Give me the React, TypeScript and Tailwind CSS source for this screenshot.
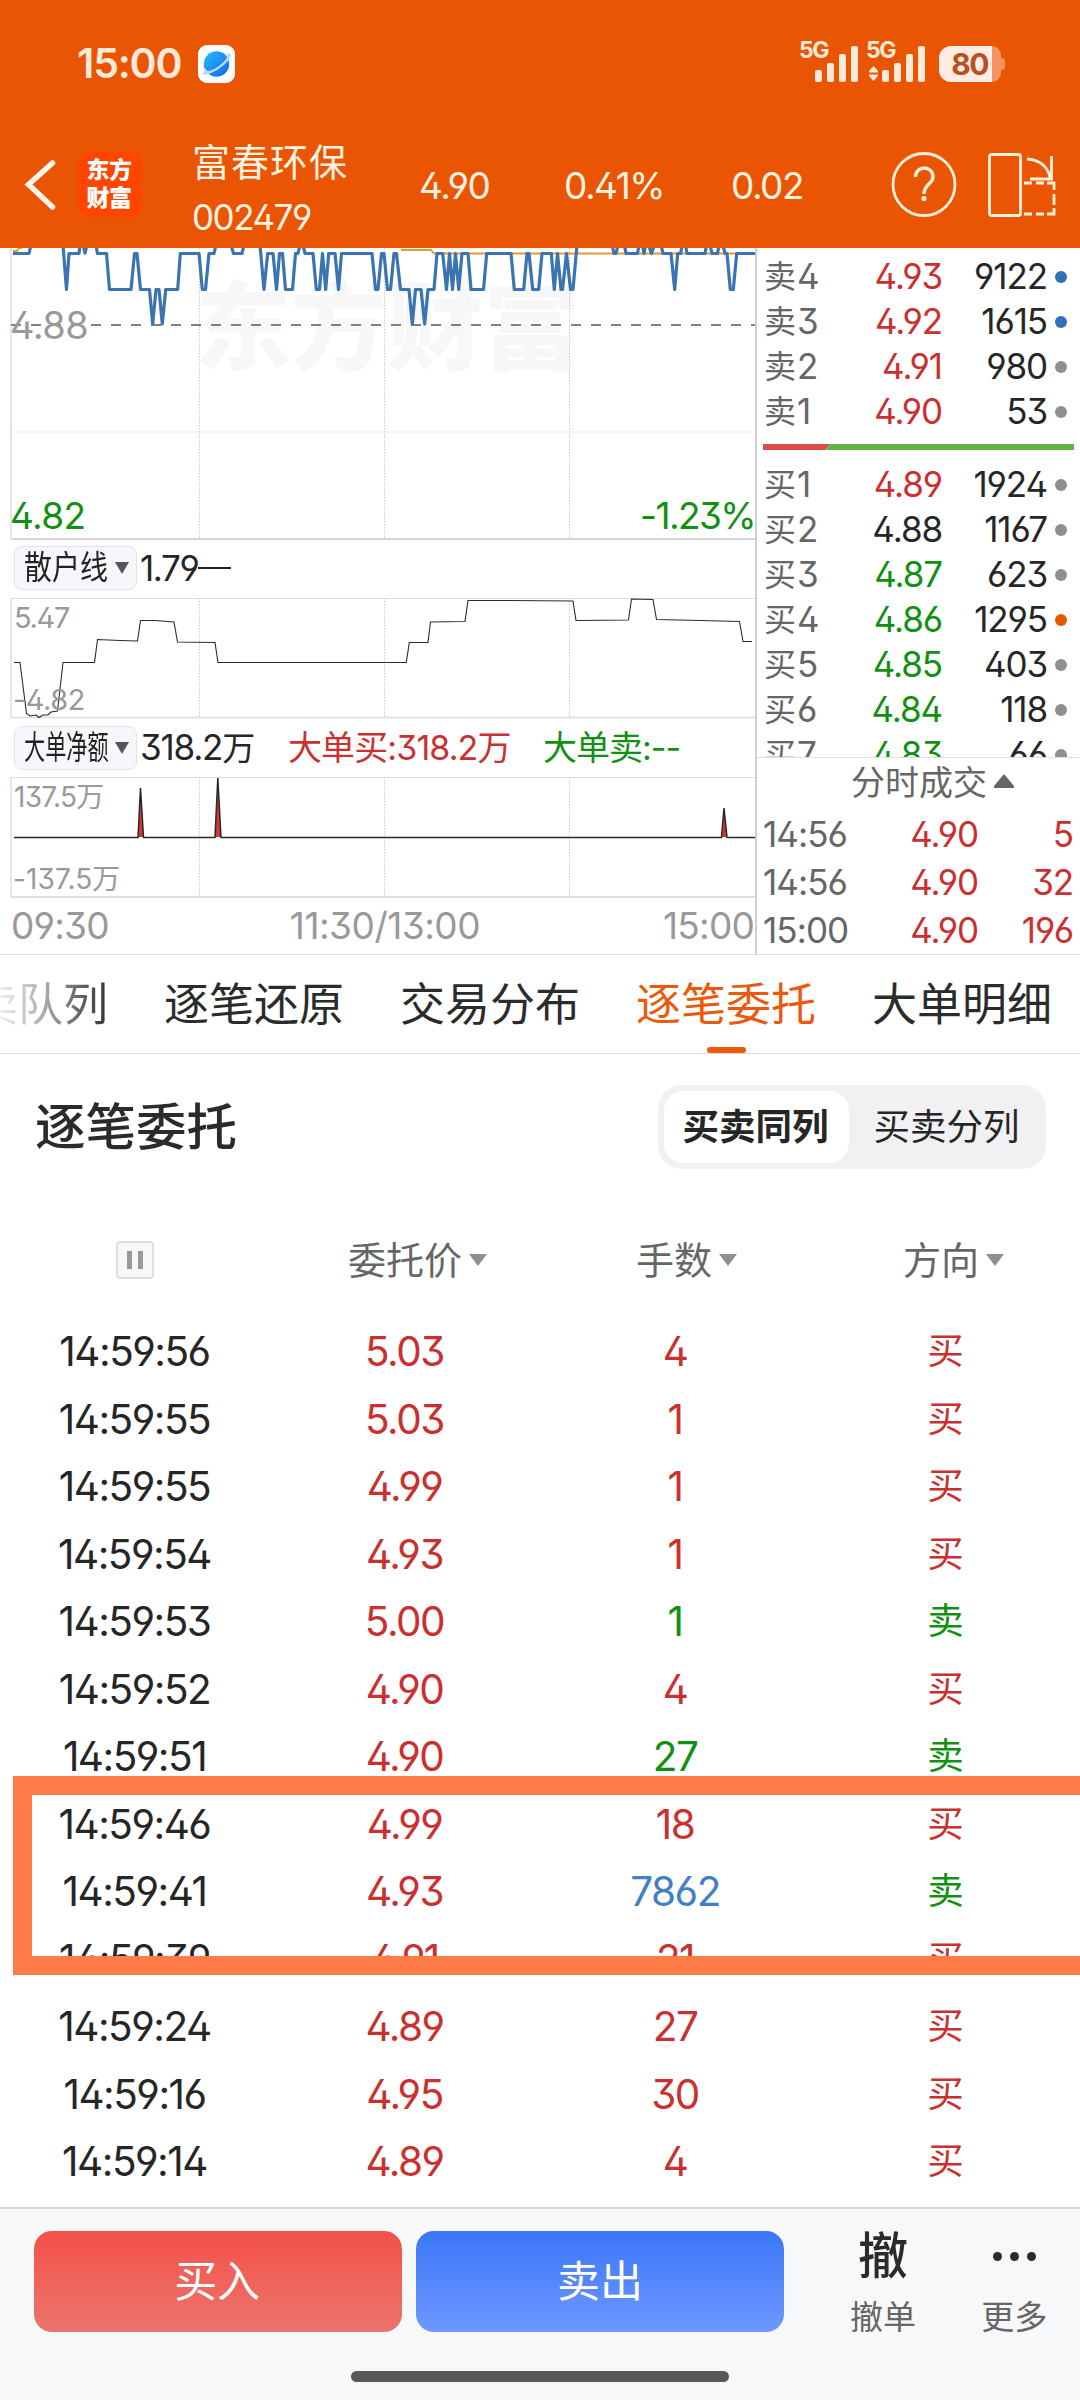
import React from "react";
import clsx from "clsx";

const RED = "text-[#c9302f]";
const GREEN = "text-[#129012]";
const BLACK = "text-[#262626]";

const GRAY_DOT = "bg-[#8e8e93]";
const BLUE_DOT = "bg-[#3070bb]";
const ORANGE_DOT = "bg-[#e55a00]";

const asks = [
  { label: "卖", level: 4, price: "4.93", volume: "9122", color: RED, dot: BLUE_DOT },
  { label: "卖", level: 3, price: "4.92", volume: "1615", color: RED, dot: BLUE_DOT },
  { label: "卖", level: 2, price: "4.91", volume: "980", color: RED, dot: GRAY_DOT },
  { label: "卖", level: 1, price: "4.90", volume: "53", color: RED, dot: GRAY_DOT },
];

const bids = [
  { label: "买", level: 1, price: "4.89", volume: "1924", color: RED, dot: GRAY_DOT },
  { label: "买", level: 2, price: "4.88", volume: "1167", color: BLACK, dot: GRAY_DOT },
  { label: "买", level: 3, price: "4.87", volume: "623", color: GREEN, dot: GRAY_DOT },
  { label: "买", level: 4, price: "4.86", volume: "1295", color: GREEN, dot: ORANGE_DOT },
  { label: "买", level: 5, price: "4.85", volume: "403", color: GREEN, dot: GRAY_DOT },
  { label: "买", level: 6, price: "4.84", volume: "118", color: GREEN, dot: GRAY_DOT },
  { label: "买", level: 7, price: "4.83", volume: "66", color: GREEN, dot: GRAY_DOT },
];

const deals = [
  { time: "14:56", price: "4.90", volume: "5" },
  { time: "14:56", price: "4.90", volume: "32" },
  { time: "15:00", price: "4.90", volume: "196" },
];

const orders = [
  { time: "14:59:56", price: "5.03", lots: "4", side: "买" },
  { time: "14:59:55", price: "5.03", lots: "1", side: "买" },
  { time: "14:59:55", price: "4.99", lots: "1", side: "买" },
  { time: "14:59:54", price: "4.93", lots: "1", side: "买" },
  { time: "14:59:53", price: "5.00", lots: "1", side: "卖" },
  { time: "14:59:52", price: "4.90", lots: "4", side: "买" },
  { time: "14:59:51", price: "4.90", lots: "27", side: "卖" },
  { time: "14:59:46", price: "4.99", lots: "18", side: "买" },
  { time: "14:59:41", price: "4.93", lots: "7862", side: "卖", big: true },
  { time: "14:59:39", price: "4.91", lots: "21", side: "买" },
  { time: "14:59:24", price: "4.89", lots: "27", side: "买" },
  { time: "14:59:16", price: "4.95", lots: "30", side: "买" },
  { time: "14:59:14", price: "4.89", lots: "4", side: "买" },
];

// price line, y is relative to the top of the chart
const priceLine =
  "M13 5.5H29L31 -3M63 -3L66.5 41.5L69 5.5H79L80 -3M83 -3L85 5L87 -3M96 -3L97.500 5.500H106.500L109.500 41.500H131L134.500 5.500H137L140.500 41.500H149.500L152.700 76L156 41.500H159L162.300 76L165.700 41.500H177.700L180.300 5.500H199L202.300 41.500H205.500L209 5.500H214L216 -3M231 -3L233.500 5.500H242L244 -3M260 -3L264 41.500L267.700 5.500H273L276.500 41.500L279.500 5.500H282.500L285.500 41.500H292.500L295.500 5.500H298L300 -3M303 -3L305 5.500H313L316.300 41.500H319.500L322.500 5.500L325.700 41.500L328.700 5.500H335L338.500 41.500L341.500 5.500H372L375.500 41.500H378L381.500 5.500H384L387.500 41.500H390.500L394 5.500H396.500L400.500 41.500H409L412.300 76L415.500 41.500H421L424.700 76L428 41.500H434L437 5.500H442.700L446.500 41.500L449.500 5.500L452.500 41.500L455.500 5.500L458.700 41.500L462 5.500H468L471 41.500H483.500L486.700 5.500H511L514.300 41.500H523.700L527 5.500H529L532.700 41.500H538.700L542 5.500H551.300L554.300 41.500L557.500 5.500L561 41.500H562.500L566.500 5.500L570.500 41.500H573L577 -3M612 -3L614 5.500H616L618 -3M624.500 -3L626 5.500H637.500L639 -3M642.500 -3L644 5.500L645.500 -3M648.500 -3L651.500 5.500L654.500 -3M661 -3L663 5.500H671L674.700 41.500L677.700 5.500H680.700L682 -3M685.500 -3L687 5.500H705L706.500 -3M710 -3L712 5.500H717.500L719 -3M723 -3L725 5.500H727L730.300 41.500H733.300L736.700 5.500H755";

const retailLine =
  "M14 64.500H20L26.500 115.500L30 118L36 117L39 119.500L43 117H48L51 114L57.500 113L63 64.500H94.500L97.500 41.500L120 42.500L137.500 43L140.500 22.500L155 22.500L174 24L177.500 44L215 44.500L218 64.500H406.300L409.300 44.500H428L430.500 24L465 23.500L468 2.500L500 2.500L573 3L576 22.500L628.500 22L631.500 1L653 1.500L656.500 21.500L700 22.500L739.500 23.500L743 43.500H752";

const SignalBars = () => (
  <svg width="44" height="36" viewBox="0 0 44 36" fill="#ffe9d9">
    <rect x="0" y="24" width="7" height="12" rx="2" />
    <rect x="12" y="17" width="7" height="19" rx="2" />
    <rect x="24" y="8" width="7" height="28" rx="2" />
    <rect x="36" y="0" width="7" height="36" rx="2" />
  </svg>
);

const StatusBar = () => (
  <div className="flex h-[126px] pl-[77px] pr-[75px] text-[#ffe9d9]">
    <div className="mt-[39px] h-12 w-[121px] text-[41px] leading-12 font-semibold tracking-[-1.2px]">
      15:00
    </div>
    <svg className="mt-[45px]" width="37" height="38" viewBox="0 0 37 38">
      <defs>
        <linearGradient id="planet" x1="0" y1="0" x2="1" y2="1">
          <stop offset="0" stopColor="#28bdf8" />
          <stop offset="1" stopColor="#1465e8" />
        </linearGradient>
      </defs>
      <rect width="37" height="38" rx="9" fill="#fff" />
      <circle cx="18.500" cy="19" r="12.700" fill="url(#planet)" />
      <path
        d="M8 24C1 32 7 30 13 28C25 23 35 12 32.500 9C31.500 7.500 29 8.500 27 9.500C31 9.500 29 13 26 16.500C20 23 9 29 8 24Z"
        fill="#b9dcfb"
      />
    </svg>
    <div className="mt-[41px] ml-auto flex h-[41px]">
      <span className="h-[18px] w-[15px] text-[23px] leading-[18px] font-bold tracking-[-1.500px]">
        <span className="-ml-px">5G</span>
      </span>
      <div className="mt-[5px] w-[52px]">
        <SignalBars />
      </div>
      <span className="h-[18px] w-[2px] text-[23px] leading-[18px] font-bold tracking-[-1.500px]">
        <span className="-ml-px">5G</span>
      </span>
      <svg className="mt-[25px] mr-[4px]" width="9" height="15" viewBox="0 0 9 15" fill="#ffe9d9">
        <path d="M4.500 0L9 5V6.500H0V5ZM4.500 15L9 10V8.500H0V10Z" />
      </svg>
      <div className="mt-[5px] w-[57px]">
        <SignalBars />
      </div>
      <div className="mt-[5px] flex h-9 items-center">
        <div className="flex h-9 w-[53px] items-center justify-end rounded-l-xl bg-[#ffede5] pr-[4px] text-[30px] leading-9 font-bold tracking-[-1.500px] text-[#b9511c]">
          80
        </div>
        <div className="h-9 w-[9px] rounded-r-[10px] bg-[#f4935f]" />
        <div className="h-3 w-[4px] rounded-r bg-[#f4935f]" />
      </div>
    </div>
  </div>
);

const Header = () => (
  <header className="h-[248px] bg-[#ea5504]">
    <StatusBar />
    <div className="flex h-[122px] text-[37px] leading-10 tracking-[-1.500px] text-[#fff3e0]">
      <svg className="mt-[32px] ml-6" width="34" height="56" viewBox="0 0 34 56" fill="none">
        <path d="M28.500 5L4.500 26.500L28.500 49" stroke="#fff5ea" strokeWidth="5.500" strokeLinecap="round" />
      </svg>
      <div className="mt-[26px] ml-[20px] flex h-[65px] w-[64px] flex-col items-center justify-center rounded-[12px] bg-[#ff4500] pr-[2px] pb-[2px] text-[23px] leading-[28px] font-black tracking-[-0.500px] text-white">
        <span>东方</span>
        <span>财富</span>
      </div>
      <div className="ml-[50px] w-[227px]">
        <div className="mt-[14px] h-[44px] text-[38px] leading-[44px] tracking-[1px]">富春环保</div>
        <div className="mt-[13px] h-[40px] text-[35px]">002479</div>
      </div>
      <div className="mt-[40px] w-[145px]">4.90</div>
      <div className="mt-[40px] w-[167px]">0.41%</div>
      <div className="mt-[40px] w-[160px]">0.02</div>
      <svg className="mt-[25px]" width="66" height="68" viewBox="0 0 66 68" fill="none" stroke="#fff0dc">
        <circle cx="33" cy="33.500" r="31" strokeWidth="2.800" />
        <path d="M24.500 26C24.500 14 42 14 42 26C42 33 33 33 33 43" strokeWidth="3.400" />
        <circle cx="33" cy="47.500" r="1.300" strokeWidth="2.600" />
      </svg>
      <svg className="mt-[25px] ml-[30px]" width="70" height="68" viewBox="0 0 70 68" fill="none" stroke="#fff0dc" strokeWidth="2.800">
        <rect x="2.500" y="3.500" width="31" height="61" rx="2" />
        <path d="M40 8C54 9 62 17 63.500 29M64.500 5V28H43" />
        <path d="M37 32H45M49 32H57M60 32H67V39M67 43V54M67 57V63H60M57 63H49M45 63H37" />
      </svg>
    </div>
  </header>
);

const GridLines = ({ height }: { height: number }) => (
  <path
    d={`M199.500 0V${height}M384.500 0V${height}M569.500 0V${height}`}
    stroke="#cccccc"
    strokeDasharray="1.500 1.500"
  />
);

const PriceChart = () => (
  <div className="relative h-[292px]">
    <div className="absolute top-[24px] left-[195px] text-[96px] leading-[110px] font-black text-[#f7f7f7]">
      东方财富
    </div>
    <svg className="absolute inset-0" width="756" height="292" fill="none">
      <GridLines height={290} />
      <path d="M11 184H755" stroke="#d8d8d8" strokeDasharray="1.500 1.500" />
      <path d="M11 0V291" stroke="#dedede" strokeWidth="1.500" />
      <path d="M11 291H755" stroke="#d6d6d6" strokeWidth="2" />
      <path d="M13 3H17L19 0H22M401 2H431L434 5.500H755" stroke="#e19a35" strokeWidth="1.800" />
      <path d="M11 77H755" stroke="#808080" strokeWidth="2" strokeDasharray="10 10" />
      <path d={priceLine} stroke="#3b74b1" strokeWidth="3.200" strokeLinejoin="round" />
    </svg>
    <div className="absolute top-[57px] left-[10px] text-[38px] leading-10 tracking-[-0.500px] text-[#999]">4.88</div>
    <div className={clsx("absolute top-[248px] left-[10px] text-[37px] leading-10 tracking-[-0.600px]", GREEN)}>4.82</div>
    <div className={clsx("absolute top-[248px] right-0 text-[37px] leading-10 tracking-[-1.600px]", GREEN)}>-1.23%</div>
  </div>
);

const DropTag = ({ children }: { children: React.ReactNode }) => (
  <div className="mr-[3px] flex h-[44px] w-[123px] items-center justify-between rounded-lg border border-[#e0e4e9] bg-[#f6f7fa] pr-[7px] pl-[9px] text-[#222]">
    <div className="h-10 w-[84px] whitespace-nowrap">{children}</div>
    <svg width="14" height="12" viewBox="0 0 14 12" fill="#555">
      <path d="M0 0H14L7 12Z" />
    </svg>
  </div>
);

const Charts = () => (
  <div className="h-[706px] w-[757px] border-r-2 border-[#cfcfcf]">
    <PriceChart />
    <div className="flex h-[58px] items-center pb-[2px] pl-[14px] text-[35px] tracking-[-1.400px] text-[#262626]">
      <DropTag>
        <div className="w-24 origin-left scale-x-[0.86] text-[32.500px] leading-10 tracking-[0px]">散户线</div>
      </DropTag>
      <span>1.79</span>
      <span className="h-[2px] w-[33px] bg-[#222]" />
    </div>
    <div className="relative h-[121px]">
      <svg className="absolute inset-0" width="756" height="121" fill="none">
        <GridLines height={119} />
        <path d="M11 0.500H755" stroke="#dcdcdc" />
        <path d="M11 0V120" stroke="#dedede" strokeWidth="1.500" />
        <path d="M11 119.500H755" stroke="#dcdcdc" strokeWidth="1.500" />
        <path d={retailLine} stroke="#2b2b2b" strokeWidth="1.100" />
      </svg>
      <div className="absolute top-[4px] left-[14px] text-[29px] leading-[32px] tracking-[-1.300px] text-[#999]">5.47</div>
      <div className="absolute top-[86px] left-[13px] text-[29px] leading-[32px] tracking-[-0.500px] text-[#999]">-4.82</div>
    </div>
    <div className="flex h-[58px] items-center pb-px pl-[14px] text-[35px] tracking-[-1.200px] text-[#262626]">
      <DropTag>
        <div className="w-32 origin-left scale-x-[0.65] text-[32.500px] leading-10 tracking-[0px]">大单净额</div>
      </DropTag>
      <span className="w-[148px]">318.2<span className="text-[33px]">万</span></span>
      <span className={clsx("w-[255px] text-[34px] tracking-[-0.900px]", RED)}>大单买:318.2万</span>
      <span className={clsx("text-[34px] tracking-[-1px]", GREEN)}>大单卖:--</span>
    </div>
    <div className="relative h-[121px]">
      <svg className="absolute inset-0" width="756" height="121" fill="none">
        <GridLines height={119} />
        <path d="M11 0.500H755" stroke="#dcdcdc" />
        <path d="M11 0V120" stroke="#dedede" strokeWidth="1.500" />
        <path d="M11 120H755" stroke="#dedede" strokeWidth="2" />
        <path
          d="M138 60L140.500 11L143.500 60ZM215 60L217.800 1L221 60ZM721.500 60L724 31L727 60Z"
          fill="#cf3a36"
        />
        <path
          d="M14 60.500H138L140.500 11L143.500 60.500H215L217.800 1L221 60.500H721.500L724 31L727 60.500H755"
          stroke="#2d2626"
          strokeWidth="1.500"
        />
      </svg>
      <div className="absolute top-[4px] left-[14px] text-[28px] leading-[32px] tracking-[-0.700px] text-[#999]">137.5万</div>
      <div className="absolute top-[86px] left-[13px] text-[28px] leading-[32px] tracking-[0.100px] text-[#999]">-137.5万</div>
    </div>
    <div className="flex h-[56px] items-center justify-between pr-px pl-[11px] text-[37px] tracking-[-0.800px] text-[#999]">
      <span>09:30</span>
      <span className="-ml-[2px] tracking-[-0.500px]">11:30/13:00</span>
      <span>15:00</span>
    </div>
  </div>
);

const BookRow = ({ row }: { row: (typeof asks)[number] }) => (
  <div className="flex h-[45px] shrink-0 items-center">
    <span className="flex w-[70px] items-center text-[#666]">
      <span className="w-[33px] text-[32px]">{row.label}</span>
      {row.level}
    </span>
    <span className={clsx("w-[108px] text-right", row.color)}>{row.price}</span>
    <span className={clsx("w-[105px] text-right", BLACK)}>{row.volume}</span>
    <span className={clsx("ml-[8px] size-3 rounded-full", row.dot)} />
  </div>
);

const OrderBook = () => (
  <div className="h-[706px] w-[323px] text-[35px] leading-[45px] tracking-[-1.100px]">
    <div className="flex h-[509px] flex-col overflow-hidden pt-[6px] pl-[7px]">
      {asks.map((row) => (
        <BookRow key={row.level} row={row} />
      ))}
      <svg className="mt-[10px] mb-[12px] -ml-px shrink-0" width="311" height="6">
        <path d="M0 0H68L62 6H0Z" fill="#dd4b4b" />
        <path d="M68 0H311V6H62Z" fill="#5fb548" />
      </svg>
      {bids.map((row) => (
        <BookRow key={row.level} row={row} />
      ))}
    </div>
    <div className="flex h-[53px] items-center border-t border-[#e0e0e0] pb-[3px] pl-[94px] text-[34px] tracking-[0px] text-[#666]">
      分时成交
      <svg className="mb-[4px] ml-[7px]" width="20" height="14" viewBox="0 0 20 14" fill="#666">
        <path d="M10 0L20 12V14H0V12Z" />
      </svg>
    </div>
    {deals.map((deal, i) => (
      <div key={i} className="flex h-12 items-center pl-[6px]">
        <span className="w-[120px] tracking-[-0.900px] text-[#666]">{deal.time}</span>
        <span className={clsx("w-[95px] text-right", RED)}>{deal.price}</span>
        <span className={clsx("w-[95px] text-right", RED)}>{deal.volume}</span>
      </div>
    ))}
  </div>
);

const Tabs = () => (
  <nav className="flex h-[100px] gap-[56px] overflow-hidden border-y border-[#dcdcdc] text-[45px] leading-[99px] whitespace-nowrap text-[#2b2b2b]">
    <div className="-ml-[72px] w-[180px] shrink-0 bg-linear-to-r from-[#fff] from-35% via-[#aaa] via-65% to-[#333] bg-clip-text text-right text-transparent">
      买卖队列
    </div>
    <div className="h-[98px] shrink-0">逐笔还原</div>
    <div className="h-[98px] shrink-0">交易分布</div>
    <div className="flex h-[98px] shrink-0 flex-col items-center text-[#e95a0c]">
      <span className="h-[92px]">逐笔委托</span>
      <span className="h-[6px] w-[39px] rounded-full bg-[#e95a0c]" />
    </div>
    <div className="h-[98px] shrink-0">大单明细</div>
  </nav>
);

const SortHead = ({ label }: { label: string }) => (
  <div className="flex h-[80px] items-center">
    {label}
    <svg className="ml-[7px]" width="18" height="12" viewBox="0 0 18 12" fill="#8e8e93">
      <path d="M0 0H18L9 12Z" />
    </svg>
  </div>
);

const OrderTable = () => (
  <section className="h-[1153px] pt-[31px] text-[#262626]">
    <div className="flex h-[84px] items-center justify-between pr-[34px] pl-[35px]">
      <h2 className="text-[50.500px] leading-[84px] font-medium text-[#2b2b2b]">逐笔委托</h2>
      <div className="flex h-[84px] w-[388px] rounded-3xl bg-[#f1f1f4] p-[6px] text-[36.500px] leading-[72px]">
        <div className="w-[185px] rounded-[20px] bg-white pr-[2px] text-center font-bold">买卖同列</div>
        <div className="flex-1 pl-[4px] text-center">买卖分列</div>
      </div>
    </div>
    <div className="mt-[51px] flex h-[80px] items-center text-[38px] text-[#666]">
      <div className="w-[348px] pl-[116px]">
        <div className="flex size-[38px] items-center justify-center gap-[6px] rounded border-2 border-[#dce0e5] bg-[#f6f8fa]">
          <span className="h-[18px] w-[5px] bg-[#999]" />
          <span className="h-[18px] w-[5px] bg-[#999]" />
        </div>
      </div>
      <div className="w-[288px]"><SortHead label="委托价" /></div>
      <div className="w-[267px]"><SortHead label="手数" /></div>
      <SortHead label="方向" />
    </div>
    <div className="relative mt-[18px] text-[40.500px] leading-[67.500px] tracking-[-1.500px]">
      {orders.map((order, i) => (
        <div key={i} className="grid h-[67.500px] grid-cols-4 text-center">
          <span className="pr-px">{order.time}</span>
          <span className={clsx("pr-px", RED)}>{order.price}</span>
          <span className={order.big ? "text-[#4280c4]" : order.side === "买" ? RED : GREEN}>
            {order.lots}
          </span>
          <span className={clsx("pl-px text-[36.500px] tracking-[0px]", order.side === "买" ? RED : GREEN)}>
            {order.side}
          </span>
        </div>
      ))}
      {/* highlight frame over the big sell order, runs off the right edge */}
      <div className="absolute top-[458px] right-0 left-[13px] h-[199px] border-[19px] border-r-0 border-[#ff7b47]" />
    </div>
  </section>
);

const BottomBar = () => (
  <footer className="h-[193px] border-t-2 border-[#d3d6da] bg-[#f7f8fa]">
    <div className="flex h-[162px] pt-[22px] pl-[34px]">
      <button className="h-[101px] w-[369px] rounded-[18px] bg-linear-to-b from-[#f45049] to-[#ea746c] pr-[2px] text-[43px] text-white">
        买入
      </button>
      <button className="ml-[14px] h-[101px] w-[368px] rounded-[18px] bg-linear-to-b from-[#3b76f8] to-[#6e98fe] text-[43px] text-white">
        卖出
      </button>
      <div className="ml-[34px] flex w-[131px] flex-col items-center text-[#666]">
        <span className="h-[50px] text-[50px] leading-[50px] font-medium text-[#2b2b2b]">撤</span>
        <span className="mt-[18px] h-9 text-[33px] leading-9">撤单</span>
      </div>
      <div className="flex w-[132px] flex-col items-center text-[#666]">
        <div className="flex h-[68px] items-start gap-[8px] pt-[21px]">
          <span className="size-[9px] rounded-full bg-[#2b2b2b]" />
          <span className="size-[9px] rounded-full bg-[#2b2b2b]" />
          <span className="size-[9px] rounded-full bg-[#2b2b2b]" />
        </div>
        <span className="h-9 text-[33px] leading-9">更多</span>
      </div>
    </div>
    <div className="mx-auto h-[11px] w-[378px] rounded-full bg-[#575957]" />
  </footer>
);

const App = () => {
  return (
    <div className="h-[2400px] w-[1080px] overflow-hidden bg-white font-['Inter','Noto_Sans_CJK_SC',sans-serif] [font-feature-settings:'ss01']">
      <Header />
      <main>
        <div className="flex">
          <Charts />
          <OrderBook />
        </div>
        <Tabs />
        <OrderTable />
      </main>
      <BottomBar />
    </div>
  );
};

export default App;
